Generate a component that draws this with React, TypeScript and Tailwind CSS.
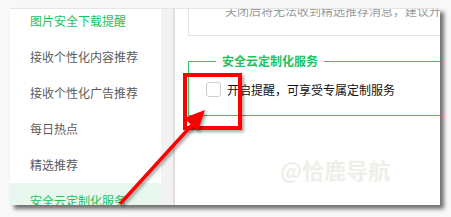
import React from "react";

const menu = [
  "图片安全下载提醒",
  "接收个性化内容推荐",
  "接收个性化广告推荐",
  "每日热点",
  "精选推荐",
  "安全云定制化服务",
];

export default function App() {
  const cn = '"Noto Sans CJK SC", "Noto Sans", sans-serif';

  return (
    <div
      className="relative w-[451px] h-[217px] overflow-hidden bg-[#f8f8f8] pl-[10px] pt-[8px]"
      style={{ fontFamily: cn }}
    >
      {/* screenshot card */}
      <div className="relative flex w-[430px] h-[197px] overflow-hidden bg-white border-t border-[#e4e4e4] shadow-[4px_4px_4px_rgba(0,0,0,0.55)]">
        {/* sidebar */}
        <div className="flex flex-col w-[151px] shrink-0 -mt-[6px]">
          {menu.map((item, i) => (
            <div
              key={item}
              className={`flex items-center h-[36px] shrink-0 pl-[20px] text-[12px] leading-[12px] ${
                i === 0
                  ? "text-[#22c35f]"
                  : i === 5
                  ? "text-[#22c35f] bg-[#e7f7ed]"
                  : "text-[#5c5c5c]"
              }`}
            >
              {item}
            </div>
          ))}
        </div>
        <div className="w-[12px] shrink-0 bg-[#f2f2f2]" />
        <div className="w-[2px] shrink-0 bg-[#dedede]" />

        {/* content */}
        <div className="flex flex-col pl-[13px] w-[280px] shrink-0">
          <div className="-mt-[21px] h-[48px] w-[270px] border border-[#e3e3e3] pl-[36px] pt-[16px] text-[12px] leading-[12px] text-[#9a9a9a] whitespace-nowrap">
            关闭后将无法收到精选推荐消息，建议开启
          </div>

          <fieldset className="mt-[19px] w-[270px] border border-[#2cc46a] pl-[17px] pt-[15px] pb-[18px]">
            <legend className="ml-[10px] px-[6px] text-[12px] leading-[12px] font-bold text-[#22c35f]">
              安全云定制化服务
            </legend>
            <label className="flex items-center gap-[6px]">
              <span className="w-[15px] h-[15px] rounded-[3px] border border-[#cfcfcf] bg-white" />
              <span className="text-[12px] leading-[15px] text-[#111111]">
                开启提醒，可享受专属定制服务
              </span>
            </label>
          </fieldset>
        </div>

        {/* watermark */}
        <div className="absolute left-[270px] top-[148px] text-[22px] leading-[24px] font-bold text-[#efefe9] whitespace-nowrap">
          @恰鹿导航
        </div>
      </div>

      {/* red annotation box */}
      <div className="absolute left-[183px] top-[73px] w-[59px] h-[57px] border-[4px] border-[#ff0000] shadow-[2px_2px_3px_rgba(0,0,0,0.35)]" />

      {/* red arrow */}
      <svg
        className="absolute left-0 top-0"
        width="451"
        height="217"
        viewBox="0 0 451 217"
      >
        <defs>
          <filter id="sh" x="-20%" y="-20%" width="140%" height="140%">
            <feDropShadow dx="2" dy="2" stdDeviation="1.5" floodColor="#000" floodOpacity="0.35" />
          </filter>
        </defs>
        <g filter="url(#sh)">
          <line x1="120" y1="204" x2="192" y2="125" stroke="#ff0000" strokeWidth="3.5" />
          <polygon points="205,110 198,131 184,118" fill="#ff0000" />
        </g>
      </svg>
    </div>
  );
}
